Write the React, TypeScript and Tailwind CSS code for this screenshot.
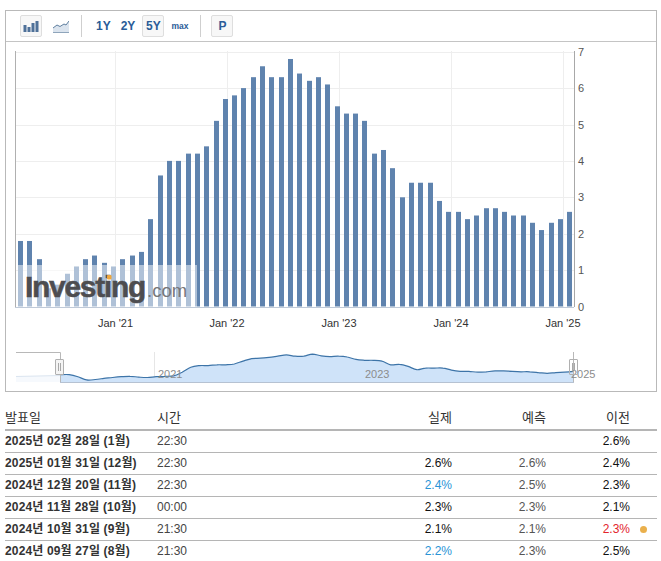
import React from "react";

const values = [1.8,1.8,1.3,0.5,0.6,0.9,1.1,1.3,1.4,1.2,1.1,1.3,1.4,1.5,2.4,3.6,4.0,4.0,4.2,4.2,4.4,5.1,5.7,5.8,6.0,6.3,6.6,6.3,6.3,6.8,6.4,6.2,6.3,6.1,5.5,5.3,5.3,5.1,4.2,4.3,3.8,3.0,3.4,3.4,3.4,2.9,2.6,2.6,2.4,2.5,2.7,2.7,2.6,2.5,2.5,2.3,2.1,2.3,2.4,2.6];

const rows = [
  { date: "2025년 02월 28일 (1월)", time: "22:30", actual: "", forecast: "", prev: "2.6%" },
  { date: "2025년 01월 31일 (12월)", time: "22:30", actual: "2.6%", forecast: "2.6%", prev: "2.4%" },
  { date: "2024년 12월 20일 (11월)", time: "22:30", actual: "2.4%", actualBlue: true, forecast: "2.5%", prev: "2.3%" },
  { date: "2024년 11월 28일 (10월)", time: "00:00", actual: "2.3%", forecast: "2.3%", prev: "2.1%" },
  { date: "2024년 10월 31일 (9월)", time: "21:30", actual: "2.1%", forecast: "2.1%", prev: "2.3%", prevRed: true, dot: true },
  { date: "2024년 09월 27일 (8월)", time: "21:30", actual: "2.2%", actualBlue: true, forecast: "2.3%", prev: "2.5%" },
];

const FONT = "'Liberation Sans', Arial, sans-serif";
const ZERO = 306.5;
const UNIT = 36.4;

function navPath() {
  const pts = values.map((v, i) => [60.5 + i * 8.69, 382 - 4.1 * v]);
  let d = `M${pts[0][0]} ${pts[0][1]}`;
  for (let i = 0; i < pts.length - 1; i++) {
    const p0 = pts[Math.max(0, i - 1)];
    const p1 = pts[i];
    const p2 = pts[i + 1];
    const p3 = pts[Math.min(pts.length - 1, i + 2)];
    const c1x = p1[0] + (p2[0] - p0[0]) / 6;
    const c1y = p1[1] + (p2[1] - p0[1]) / 6;
    const c2x = p2[0] - (p3[0] - p1[0]) / 6;
    const c2y = p2[1] - (p3[1] - p1[1]) / 6;
    d += ` C${c1x.toFixed(1)} ${c1y.toFixed(1)} ${c2x.toFixed(1)} ${c2y.toFixed(1)} ${p2[0].toFixed(1)} ${p2[1].toFixed(1)}`;
  }
  return d;
}

function Chart() {
  const line = navPath();
  const ticks = [
    { x: 115.5, label: "Jan '21" },
    { x: 227, label: "Jan '22" },
    { x: 339, label: "Jan '23" },
    { x: 451, label: "Jan '24" },
    { x: 563, label: "Jan '25" },
  ];
  return (
    <svg width="650" height="349" viewBox="6 42 650 349" className="block" style={{ fontFamily: FONT }}>
      {[0, 1, 2, 3, 4, 5, 6, 7].map((n) => (
        <line key={n} x1="15" x2="574" y1={Math.round(ZERO - n * UNIT) + 0.5} y2={Math.round(ZERO - n * UNIT) + 0.5} stroke={n === 0 ? "#c0cad8" : "#eeeeee"} />
      ))}
      {ticks.map((t) => (
        <line key={t.x} x1={Math.floor(t.x) + 0.5} x2={Math.floor(t.x) + 0.5} y1="51" y2="307" stroke="#eeeeee" />
      ))}
      <line x1="15.5" x2="15.5" y1="51" y2="307" stroke="#b0b0b0" />
      <line x1="574.5" x2="574.5" y1="51" y2="307" stroke="#a8a8a8" />
      {values.map((v, i) => (
        <rect key={i} x={Math.round(18 + i * 9.31)} y={ZERO - v * UNIT} width="5" height={v * UNIT} fill="#5f83ae" />
      ))}
      {[0, 1, 2, 3, 4, 5, 6, 7].map((n) => (
        <text key={n} x="578" y={ZERO - n * UNIT + 4} fontSize="11" fill="#555555">{n}</text>
      ))}
      {ticks.map((t) => (
        <text key={t.label} x={t.x} y="327" fontSize="11" fill="#333333" textAnchor="middle">{t.label}</text>
      ))}

      <rect x="18" y="265" width="179" height="42" fill="#ffffff" fillOpacity="0.5" />
      <text x="25" y="297" fontSize="30" fontWeight="700" fill="#4d4d50" stroke="#4d4d50" strokeWidth="0.5" letterSpacing="-1.3">Investing</text>
      <text x="147" y="297" fontSize="18.5" fill="#77777a">.com</text>
      <rect x="107" y="275" width="4.5" height="4.5" rx="1" fill="#f0a73c" />

      <line x1="154.5" x2="154.5" y1="352" y2="382" stroke="#e6e6e6" />
      <path d={`${line} L573 382 L60.5 382 Z`} fill="#cfe3f9" />
      <path d={line} fill="none" stroke="#3d74a8" strokeWidth="1.2" />
      <path d="M16 376.5 L60 375.5 L60 382 L16 382 Z" fill="#f6f9fd" />
      <path d="M16 376.5 L60 375.5" fill="none" stroke="#dbe5f0" />
      <line x1="60" x2="574" y1="382.5" y2="382.5" stroke="#b6c2d2" />
      <path d="M16 352.5 H60.5 V382" fill="none" stroke="#b8b8b8" />
      <line x1="573.5" x2="573.5" y1="352" y2="382" stroke="#b8b8b8" />
      <text x="158" y="378" fontSize="11" fill="#8c8c8c">2021</text>
      <text x="365" y="378" fontSize="11" fill="#8c8c8c">2023</text>
      <text x="571" y="378" fontSize="11" fill="#8c8c8c">2025</text>
      {[
        { x: 55.5, fill: "#f4f4f4" },
        { x: 569.5, fill: "none" },
      ].map((h) => (
        <g key={h.x}>
          <rect x={h.x} y="359.5" width="8" height="15" fill={h.fill} stroke="#b0b0b0" rx="0.5" />
          <line x1={h.x + 3} x2={h.x + 3} y1="363" y2="371" stroke="#a8a8a8" />
          <line x1={h.x + 5} x2={h.x + 5} y1="363" y2="371" stroke="#a8a8a8" />
        </g>
      ))}
    </svg>
  );
}

function IconButton({ children }: { children: React.ReactNode }) {
  return (
    <div className="w-[22px] h-[22px] flex items-center justify-center border border-[#dedede] bg-[#f7f7f7] rounded-[2px] text-[#2a5c98] font-bold text-[12px]">
      {children}
    </div>
  );
}

function Toolbar() {
  return (
    <div className="h-[31px] flex items-center pl-[14px] border-b border-[#c4c4c4] font-['Liberation_Sans',Arial,sans-serif]">
      <IconButton>
        <svg width="16" height="11" viewBox="0 0 16 11">
          <rect x="0.5" y="4" width="3" height="7" fill="#4f7199" />
          <rect x="4.5" y="6" width="3" height="5" fill="#4f7199" />
          <rect x="8.5" y="2" width="3" height="9" fill="#4f7199" />
          <rect x="12.5" y="0" width="3" height="11" fill="#4f7199" />
        </svg>
      </IconButton>
      <svg width="16" height="13" viewBox="0 0 16 13" className="ml-[11px]">
        <path d="M0 8 L4 5 L7 6.5 L11 4 L13 5 L16 1 V12.5 H0 Z" fill="#dbe4ee" />
        <path d="M0 8 L4 5 L7 6.5 L11 4 L13 5 L16 1" fill="none" stroke="#5f7f9f" />
        <line x1="0" x2="16" y1="12.5" y2="12.5" stroke="#8fa5bb" />
      </svg>
      <div className="w-px h-[22px] bg-[#cfcfcf] ml-[12px]" />
      <span className="ml-[14px] text-[#2a5c98] font-bold text-[12px]">1Y</span>
      <span className="ml-[10px] text-[#2a5c98] font-bold text-[12px]">2Y</span>
      <div className="ml-[7px]"><IconButton>5Y</IconButton></div>
      <span className="ml-[7px] text-[#2a5c98] font-bold text-[8.5px]">max</span>
      <div className="w-px h-[22px] bg-[#cfcfcf] ml-[12px]" />
      <div className="ml-[10px]"><IconButton>P</IconButton></div>
    </div>
  );
}

export default function App() {
  return (
    <div className="w-[661px] h-[561px] bg-white overflow-hidden pt-[10px] font-['Liberation_Sans','Noto_Sans_CJK_KR',sans-serif]">
      <div className="ml-[5px] w-[652px] h-[382px] border border-[#b9b9b9]">
        <Toolbar />
        <Chart />
      </div>
      <table className="ml-[5px] mt-[14px] w-[652px] border-collapse table-fixed text-[12px] text-[#333333]">
        <colgroup>
          <col className="w-[152px]" />
          <col className="w-[100px]" />
          <col className="w-[195px]" />
          <col className="w-[94px]" />
          <col className="w-[84px]" />
          <col className="w-[27px]" />
        </colgroup>
        <thead>
          <tr className="h-[24px] border-b-2 border-[#b5b5b5] text-[13px]">
            <th className="font-normal text-left">발표일</th>
            <th className="font-normal text-left">시간</th>
            <th className="font-normal text-right">실제</th>
            <th className="font-normal text-right">예측</th>
            <th className="font-normal text-right">이전</th>
            <th />
          </tr>
        </thead>
        <tbody>
          {rows.map((r, i) => (
            <tr key={r.date} className={`h-[22px] ${i < rows.length - 1 ? "border-b border-[#b5b5b5]" : ""}`}>
              <td className="font-bold whitespace-nowrap p-0 tracking-[0.15px]">{r.date}</td>
              <td className="p-0 text-[#444444]">{r.time}</td>
              <td className={`p-0 text-right ${r.actualBlue ? "text-[#2a94d6]" : "text-[#111111]"}`}>{r.actual}</td>
              <td className="p-0 text-right text-[#555555]">{r.forecast}</td>
              <td className={`p-0 text-right ${r.prevRed ? "text-[#e3242b]" : "text-[#111111]"}`}>{r.prev}</td>
              <td className="p-0">
                {r.dot ? <div className="ml-[10px] w-[7px] h-[7px] rounded-full bg-[#eab04c]" /> : null}
              </td>
            </tr>
          ))}
        </tbody>
      </table>
    </div>
  );
}
